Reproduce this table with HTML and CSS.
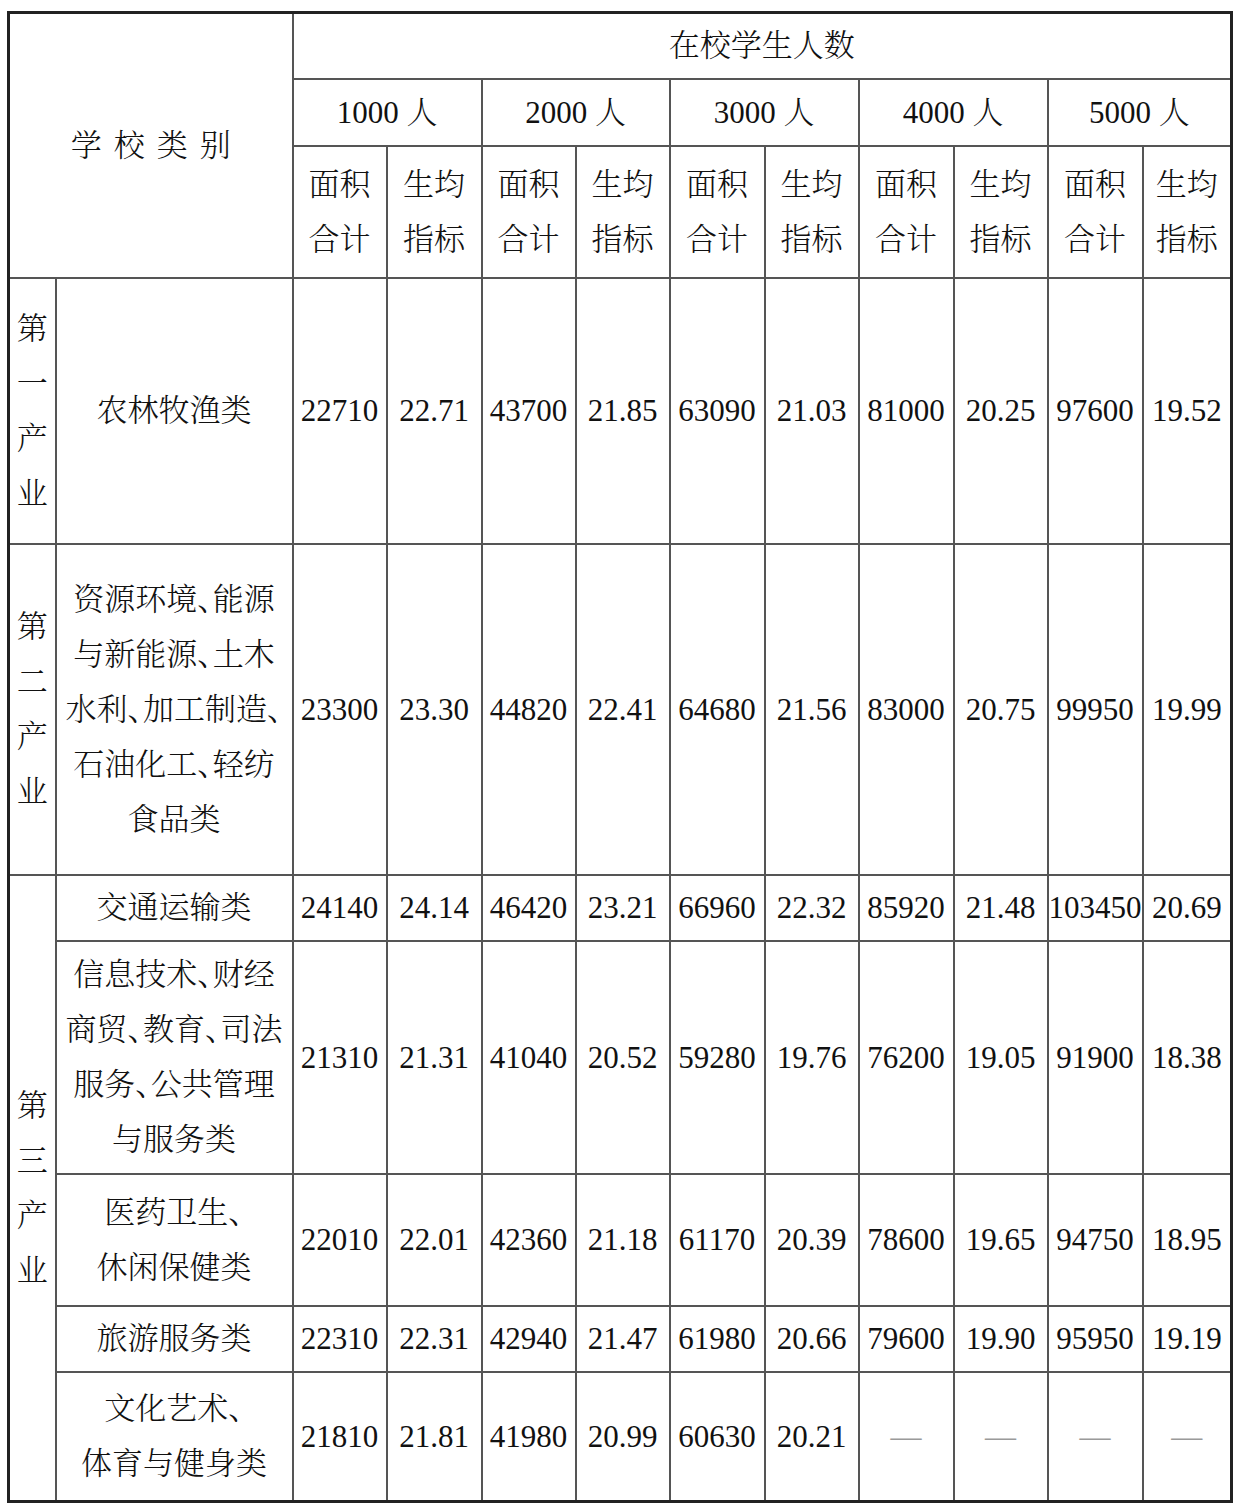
FILE: index.html
```html
<!DOCTYPE html>
<html lang="zh-CN">
<head>
<meta charset="utf-8">
<title>学校类别 在校学生人数</title>
<link rel="stylesheet" href="styles.css">
</head>
<body>
<table class="grid">
  <colgroup>
    <col class="c-ind"><col class="c-cat">
    <col class="c-a"><col class="c-b"><col class="c-a"><col class="c-a"><col class="c-b">
    <col class="c-a"><col class="c-b"><col class="c-a"><col class="c-b"><col class="c-last">
  </colgroup>
  <tr class="h66">
    <th colspan="2" rowspan="3" class="title">学校类别</th>
    <th colspan="10">在校学生人数</th>
  </tr>
  <tr class="h67">
    <th colspan="2">1000 人</th>
    <th colspan="2">2000 人</th>
    <th colspan="2">3000 人</th>
    <th colspan="2">4000 人</th>
    <th colspan="2">5000 人</th>
  </tr>
  <tr class="h132">
    <th>面积<br>合计</th><th>生均<br>指标</th>
    <th>面积<br>合计</th><th>生均<br>指标</th>
    <th>面积<br>合计</th><th>生均<br>指标</th>
    <th>面积<br>合计</th><th>生均<br>指标</th>
    <th>面积<br>合计</th><th>生均<br>指标</th>
  </tr>
  <tr class="h266">
    <td class="ind">第<br>一<br>产<br>业</td>
    <td class="cat">农林牧渔类</td>
    <td>22710</td><td>22.71</td><td>43700</td><td>21.85</td><td>63090</td><td>21.03</td><td>81000</td><td>20.25</td><td>97600</td><td>19.52</td>
  </tr>
  <tr class="h331">
    <td class="ind">第<br>二<br>产<br>业</td>
    <td class="cat">资源环境、能源<br>与新能源、土木<br>水利、加工制造、<br>石油化工、轻纺<br>食品类</td>
    <td>23300</td><td>23.30</td><td>44820</td><td>22.41</td><td>64680</td><td>21.56</td><td>83000</td><td>20.75</td><td>99950</td><td>19.99</td>
  </tr>
  <tr class="h66">
    <td class="ind" rowspan="5">第<br>三<br>产<br>业</td>
    <td class="cat">交通运输类</td>
    <td>24140</td><td>24.14</td><td>46420</td><td>23.21</td><td>66960</td><td>22.32</td><td>85920</td><td>21.48</td><td>103450</td><td>20.69</td>
  </tr>
  <tr class="h233">
    <td class="cat">信息技术、财经<br>商贸、教育、司法<br>服务、公共管理<br>与服务类</td>
    <td>21310</td><td>21.31</td><td>41040</td><td>20.52</td><td>59280</td><td>19.76</td><td>76200</td><td>19.05</td><td>91900</td><td>18.38</td>
  </tr>
  <tr class="h132">
    <td class="cat">医药卫生、<br>休闲保健类</td>
    <td>22010</td><td>22.01</td><td>42360</td><td>21.18</td><td>61170</td><td>20.39</td><td>78600</td><td>19.65</td><td>94750</td><td>18.95</td>
  </tr>
  <tr class="h66">
    <td class="cat">旅游服务类</td>
    <td>22310</td><td>22.31</td><td>42940</td><td>21.47</td><td>61980</td><td>20.66</td><td>79600</td><td>19.90</td><td>95950</td><td>19.19</td>
  </tr>
  <tr class="h130">
    <td class="cat">文化艺术、<br>体育与健身类</td>
    <td>21810</td><td>21.81</td><td>41980</td><td>20.99</td><td>60630</td><td>20.21</td>
    <td class="none">—</td><td class="none">—</td><td class="none">—</td><td class="none">—</td>
  </tr>
</table>
</body>
</html>
```
FILE: styles.css
```css
html, body {
  margin: 0;
  padding: 0;
  background: #ffffff;
}

body {
  padding: 11px 0 0 7px;
}

.grid {
  border-collapse: collapse;
  table-layout: fixed;
  border: 3px solid #222222;
  font-family: "Liberation Serif", "Noto Serif CJK SC", "Noto Sans CJK SC", serif;
  font-size: 31px;
  line-height: 55px;
  color: #111111;
}

.grid th,
.grid td {
  border: 2px solid #555555;
  padding: 0;
  text-align: center;
  vertical-align: middle;
  font-weight: 300;
  white-space: nowrap;
  overflow: visible;
}

.c-ind { width: 47px; }
.c-cat { width: 237px; }
.c-a { width: 94px; }
.c-b { width: 95px; }
.c-last { width: 89px; }

.h66 { height: 66px; }
.h67 { height: 67px; }
.h132 { height: 132px; }
.h266 { height: 266px; }
.h331 { height: 331px; }
.h233 { height: 233px; }
.h130 { height: 130px; }

.title {
  letter-spacing: 12px;
  text-indent: 12px;
}

.ind {
  line-height: 55px;
}

.cat {
  font-feature-settings: "halt";
}

.none {
  color: #9a9a9a;
}
```
